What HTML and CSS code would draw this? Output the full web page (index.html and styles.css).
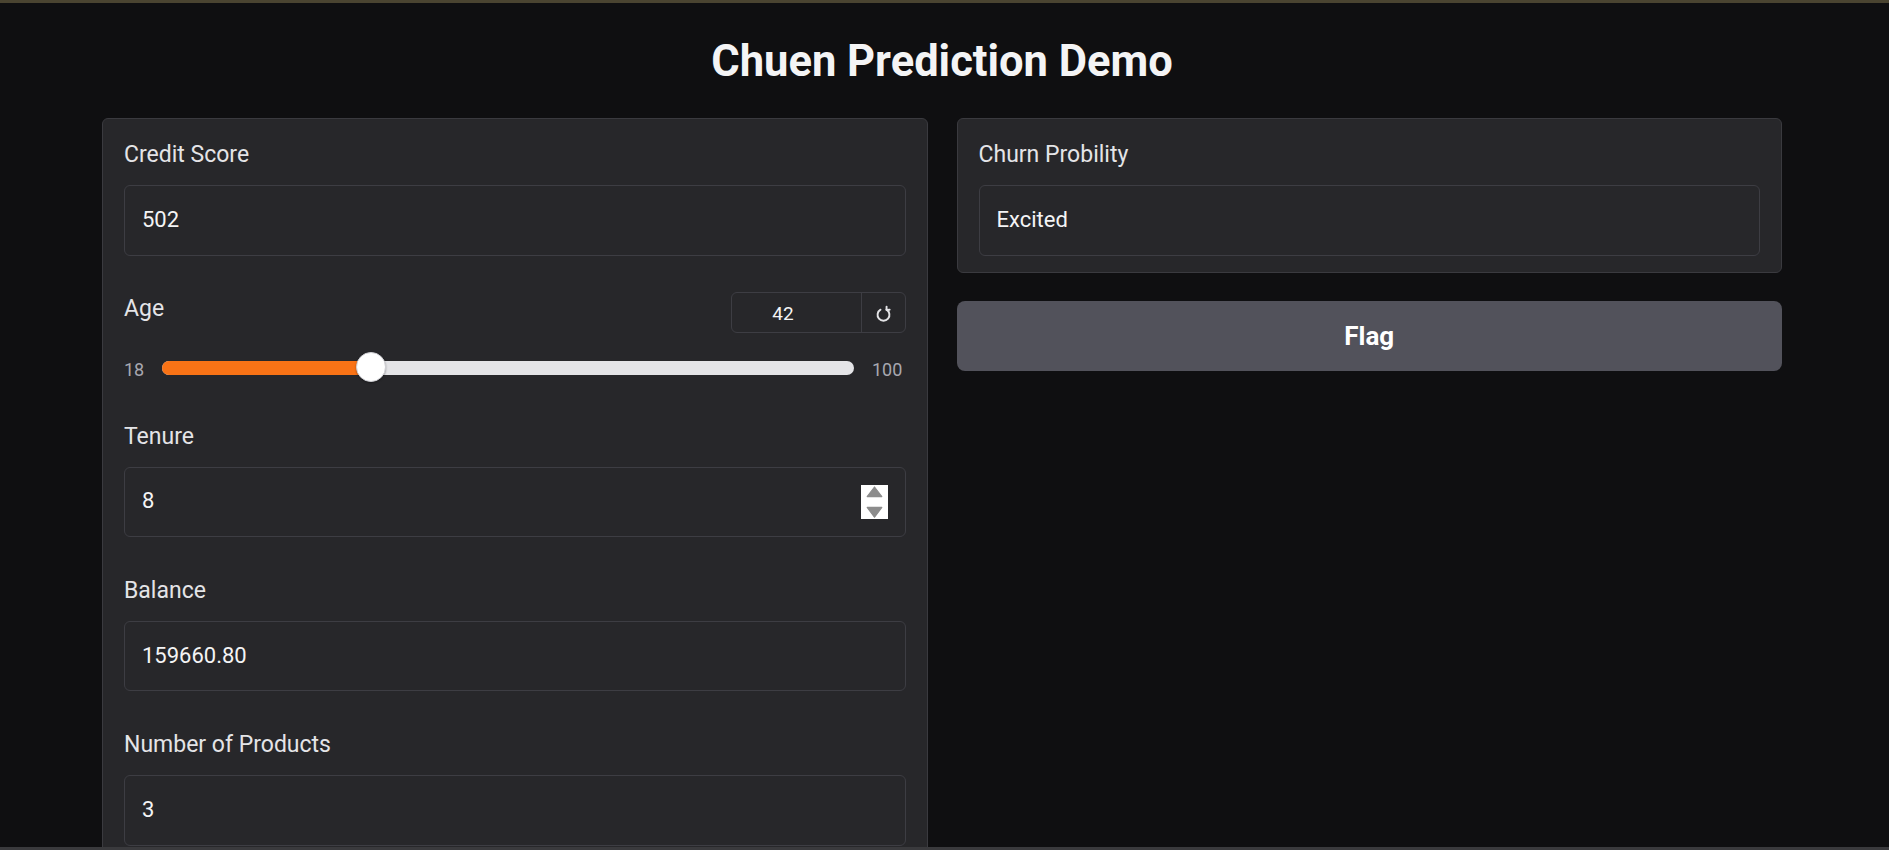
FILE: index.html
```html
<!DOCTYPE html>
<html lang="en">
<head>
<meta charset="utf-8">
<title>Chuen Prediction Demo</title>
<link rel="stylesheet" href="styles.css">
</head>
<body>
<div class="topbar"></div>
<main class="app">
  <h1 class="title">Chuen Prediction Demo</h1>
  <div class="row">
    <div class="col">
      <div class="panel">
        <div class="field">
          <span class="label">Credit Score</span>
          <div class="textbox">502</div>
        </div>
        <div class="field">
          <div class="slider-head">
            <span class="label label-inline">Age</span>
            <div class="numbox">
              <span class="num">42</span>
              <span class="reset">
                <svg width="17" height="17" viewBox="0 0 16 16" fill="none" stroke="#e4e4e7" stroke-width="1.8" stroke-linecap="round" stroke-linejoin="round">
                  <path d="M5.2 4.4 A5.6 5.6 0 1 0 10.8 4.4"/>
                  <path d="M10.9 1.5 L10.8 4.6 L13.8 4.4"/>
                </svg>
              </span>
            </div>
          </div>
          <div class="slider">
            <span class="min">18</span>
            <div class="track" style="--p:0.2927">
              <div class="fill"></div>
              <div class="thumb"></div>
            </div>
            <span class="max">100</span>
          </div>
        </div>
        <div class="field">
          <span class="label">Tenure</span>
          <div class="textbox">
            <span class="value">8</span>
            <span class="spinner">
              <svg width="27" height="34" viewBox="0 0 27 34">
                <rect width="27" height="34" fill="#ffffff"/>
                <path d="M13.5 2 L20.8 11.6 L6.2 11.6 Z" fill="#8c8c8c" stroke="#8c8c8c" stroke-width="1.2" stroke-linejoin="round"/>
                <path d="M6.2 22.4 L20.8 22.4 L13.5 32.2 Z" fill="#8c8c8c" stroke="#8c8c8c" stroke-width="1.2" stroke-linejoin="round"/>
              </svg>
            </span>
          </div>
        </div>
        <div class="field">
          <span class="label">Balance</span>
          <div class="textbox">159660.80</div>
        </div>
        <div class="field">
          <span class="label">Number of Products</span>
          <div class="textbox">3</div>
        </div>
      </div>
    </div>
    <div class="col">
      <div class="panel panel-output">
        <div class="field">
          <span class="label">Churn Probility</span>
          <div class="textbox">Excited</div>
        </div>
      </div>
      <button class="flag" type="button">Flag</button>
    </div>
  </div>
</main>
<div class="bottombar"></div>
</body>
</html>
```

FILE: styles.css
```css
* {
  box-sizing: border-box;
}

html,
body {
  margin: 0;
  height: 100%;
  overflow: hidden;
}

body {
  background: #0f0f11;
  color: #f4f4f5;
  font-family: Roboto, "Liberation Sans", sans-serif;
}

.topbar {
  height: 3px;
  background: #4a4431;
}

.bottombar {
  position: fixed;
  left: 0;
  right: 0;
  bottom: 0;
  height: 3px;
  background: #3a3a3d;
}

.app {
  width: 1680px;
  margin-left: 102px;
}

.title {
  margin: 33px 0 30px;
  font-size: 43.5px;
  font-weight: 700;
  line-height: 52px;
  text-align: center;
  color: #f4f4f5;
}

.row {
  display: grid;
  grid-template-columns: 1fr 1fr;
  gap: 29px;
  align-items: start;
}

.col {
  display: flex;
  flex-direction: column;
  gap: 28.7px;
}

.panel {
  display: flex;
  flex-direction: column;
  gap: 35.5px;
  background: #27272a;
  border: 1px solid #3a3a3f;
  border-radius: 6px;
  padding: 18px 21px 17px;
}

.panel-output {
  padding-bottom: 16px;
}

.field {
  display: flex;
  flex-direction: column;
}

.label {
  display: block;
  padding-top: 1.3px;
  font-size: 23px;
  line-height: 34.5px;
  color: #e4e4e7;
  margin-bottom: 12.5px;
}

.label-inline {
  margin-bottom: 0;
}

.textbox {
  display: flex;
  align-items: center;
  height: 70.4px;
  padding: 0 17px 2px;
  background: #27272a;
  border: 1px solid #3d3d43;
  border-radius: 6px;
  font-size: 22px;
  color: #f4f4f5;
}

.value {
  flex: 1;
}

.spinner {
  display: flex;
  width: 27px;
  height: 34px;
  margin-top: 2px;
}

.slider-head {
  display: flex;
  justify-content: space-between;
  align-items: flex-start;
  height: 41.5px;
}

.numbox {
  display: flex;
  width: 175px;
  height: 41px;
  margin-top: 0.5px;
  border: 1px solid #3d3d43;
  border-radius: 6px;
}

.num {
  flex: 1;
  padding: 2px 26px 0 0;
  font-size: 19px;
  line-height: 37px;
  text-align: center;
  color: #f4f4f5;
}

.reset {
  display: flex;
  align-items: center;
  justify-content: center;
  width: 44px;
  padding-top: 2px;
  border-left: 1px solid #3d3d43;
}

.slider {
  display: flex;
  align-items: center;
  gap: 18px;
  height: 30px;
  margin-top: 20.3px;
}

.min,
.max {
  padding-top: 4px;
  font-size: 18px;
  color: #a8a8b0;
}

.min {
  width: 20px;
}

.max {
  width: 33.5px;
}

.track {
  position: relative;
  flex: 1;
  height: 14px;
  border-radius: 7px;
  background: #e4e4e7;
}

.fill {
  position: absolute;
  left: 0;
  top: 0;
  bottom: 0;
  width: calc(15px + (100% - 30px) * var(--p));
  border-radius: 7px 0 0 7px;
  background: #f97316;
}

.thumb {
  position: absolute;
  top: 50%;
  left: calc(15px + (100% - 30px) * var(--p));
  width: 30px;
  height: 30px;
  margin: -16px 0 0 -15px;
  border-radius: 50%;
  background: #ffffff;
  border: 1px solid #cfcfd4;
  box-shadow: 0 1px 2px rgba(0, 0, 0, 0.35);
}

.flag {
  height: 69.7px;
  width: 100%;
  border: none;
  border-radius: 8px;
  background: #52525b;
  color: #ffffff;
  font-family: Roboto, "Liberation Sans", sans-serif;
  font-size: 26px;
  font-weight: 700;
}
```
